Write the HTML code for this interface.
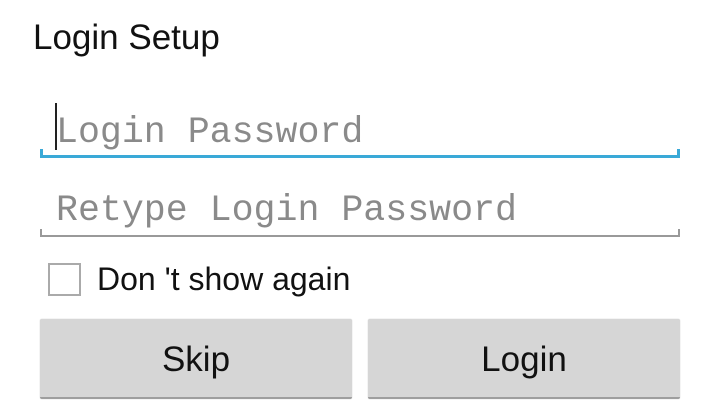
<!DOCTYPE html>
<html><head><style>
body{margin:0;width:720px;height:416px;background:#fff;position:relative;overflow:hidden;font-family:"Liberation Sans",sans-serif}
.a{position:absolute}
.mono{font-family:"Liberation Mono",monospace;font-size:36.6px;color:#8a8a8a;white-space:nowrap;line-height:1}
.btn{position:absolute;top:319px;width:312px;height:78px;background:#d6d6d6;border-bottom:2px solid #9e9e9e;border-radius:2px;box-shadow:0 0 1px #bbb;text-align:center;line-height:82px;font-size:35px;color:#111}
</style></head><body>
<div class="a" style="left:33px;top:17px;font-size:35px;color:#111;line-height:42px">Login Setup</div>
<div class="a mono" style="left:56px;top:115px">Login Password</div>
<div class="a" style="left:55px;top:103px;width:2px;height:47px;background:#222"></div>
<div class="a" style="left:40px;top:155px;width:640px;height:3px;background:#3aa9d7"></div>
<div class="a" style="left:40px;top:149px;width:3px;height:8px;background:#3aa9d7"></div>
<div class="a" style="left:677px;top:149px;width:3px;height:8px;background:#3aa9d7"></div>
<div class="a mono" style="left:56px;top:193px">Retype Login Password</div>
<div class="a" style="left:40px;top:235px;width:640px;height:2px;background:#999"></div>
<div class="a" style="left:40px;top:229px;width:2px;height:7px;background:#999"></div>
<div class="a" style="left:678px;top:229px;width:2px;height:7px;background:#999"></div>
<div class="a" style="left:48px;top:263px;width:29px;height:29px;border:2px solid #aaa"></div>
<div class="a" style="left:97px;top:259px;font-size:32px;color:#111;line-height:40px">Don 't show again</div>
<div class="btn" style="left:40px">Skip</div>
<div class="btn" style="left:368px">Login</div>
</body></html>
